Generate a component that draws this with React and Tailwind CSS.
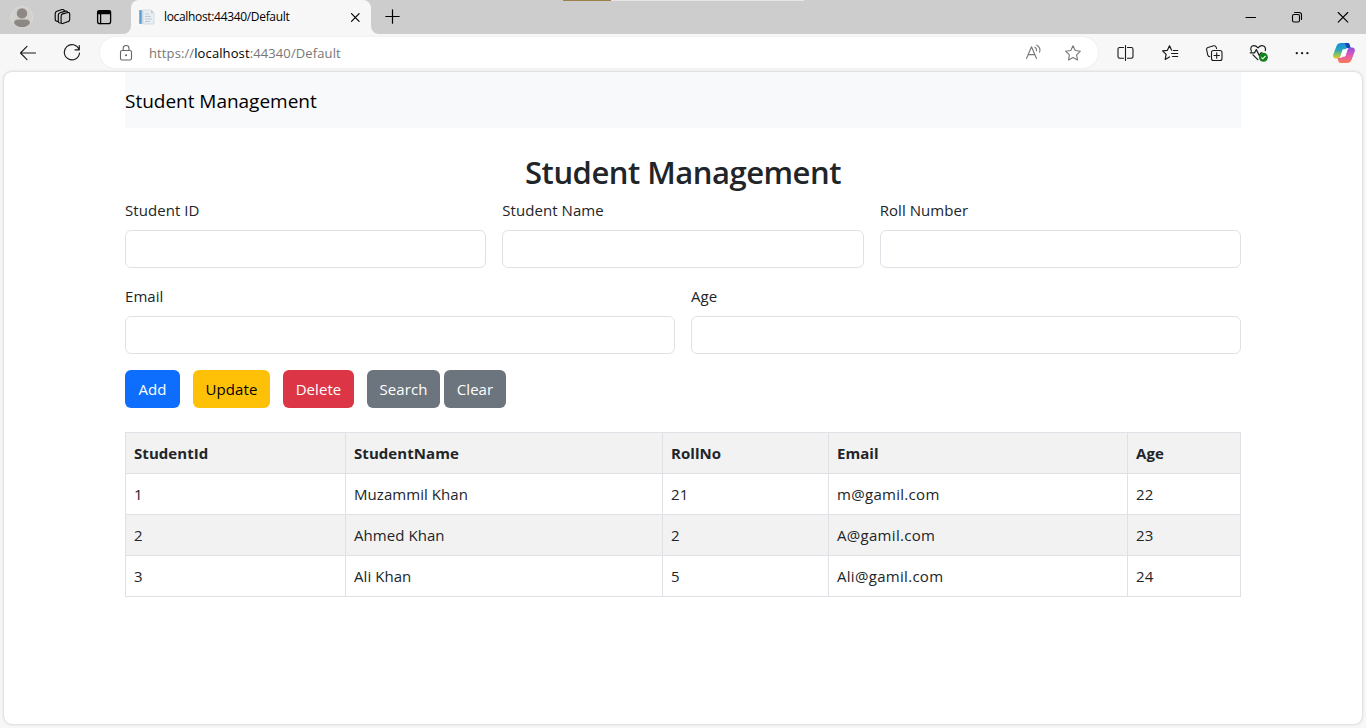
import React from "react";

const students = [
  { id: 1, name: "Muzammil Khan", roll: 21, email: "m@gamil.com", age: 22 },
  { id: 2, name: "Ahmed Khan", roll: 2, email: "A@gamil.com", age: 23 },
  { id: 3, name: "Ali Khan", roll: 5, email: "Ali@gamil.com", age: 24 },
];

function Icon({ size = 18, className = "", children, w = 1.1 }) {
  return (
    <svg
      width={size}
      height={size}
      viewBox={`0 0 ${size} ${size}`}
      className={`shrink-0 ${className}`}
      fill="none"
      stroke="currentColor"
      strokeWidth={w}
      strokeLinecap="round"
      strokeLinejoin="round"
    >
      {children}
    </svg>
  );
}

function TabStrip() {
  return (
    <div className="flex h-[34px] bg-[#f7f7f7] text-black">
      <div className="flex w-[131px] items-center rounded-br-lg bg-[#cdcdcd] pl-[11px]">
        <svg width="22" height="22" viewBox="0 0 22 22" className="shrink-0">
          <circle cx="11" cy="11" r="10.5" fill="#d2d0cd" stroke="#dddbd7" />
          <circle cx="11" cy="7.4" r="5.2" fill="#8d8884" />
          <path d="M3 17.2C3 14.6 5 13.5 7 13.5h8c2 0 4 1.1 4 3.7C17.2 19.8 14.3 21.2 11 21.2S4.8 19.8 3 17.2Z" fill="#8d8884" />
        </svg>
        <Icon className="ml-5" w={1.1}>
          <path d="M9.600 5.900 15 4.500c1-.2 1.700.3 1.700 1.300v5.600c0 1.100-.6 1.900-1.600 2.200l-5.300 1.900c-1 .3-1.700-.2-1.700-1.200V8.200c0-1.200.5-2 1.500-2.300Z" />
          <path d="M7.400 15c-1.200.2-2.100-.5-2.100-1.700V7c0-1.200.7-2 1.800-2.300l5.200-1.600c1-.3 1.800 0 2.200.8" />
          <path d="M4.500 13.400c-1.300 0-2.300-.7-2.300-2V5.700c0-1.200.6-2 1.700-2.400l5.200-1.700c1-.3 1.800 0 2.200.8" />
        </Icon>
        <Icon className="ml-[24px]" size={18} w={1.3}>
          <rect x="2.600" y="2.600" width="13" height="13" rx="2.200" />
          <path d="M3 3.200h12.400v2.500H3z" fill="currentColor" />
          <path d="M5.600 6v9.500" />
        </Icon>
      </div>
      <div className="w-[240px] bg-[#cdcdcd]">
        <div className="flex h-full items-center rounded-t-lg bg-[#f7f7f7] pr-[9px] pl-[8px]">
          <svg width="16" height="16" viewBox="0 0 16 16" className="shrink-0">
            <path d="M0 1h3.4v14H0z" fill="#83b5dc" />
            <path d="M1 2h1v12H1z" fill="#5d9ac9" />
            <path d="M4 1h8l3 3v11H4z" fill="#e9eef2" stroke="#cbd3da" strokeWidth=".7" />
            <path d="M12 1v3h3" fill="#bccbd8" />
            <path d="M6 5h4M6 7.500h6M6 10h7M6 12.500h5" stroke="#bdc9d4" />
          </svg>
          <span className="ml-[9px] text-[12px] leading-4 tracking-[-0.33px] whitespace-nowrap">localhost:44340/Default</span>
          <Icon size={14} className="ml-auto" w={1.2}>
            <path d="m3.500 3.700 7.600 7.600M11.100 3.700l-7.600 7.600" />
          </Icon>
        </div>
      </div>
      <div className="relative flex flex-1 items-center rounded-bl-lg bg-[#cdcdcd] pl-[14px]">
        <Icon size={16} w={1.2}>
          <path d="M.8 7.500h13.400M7.500.8v13.400" />
        </Icon>
        <div className="absolute top-0 left-[192px] flex h-px w-[241px] bg-[#e5e5e5]">
          <div className="w-12 bg-[#9c8049]" />
        </div>
        <div className="ml-auto flex items-center gap-8 pr-4">
          <Icon size={14} w={1.1}>
            <path d="M2 7.500h9.500" />
          </Icon>
          <Icon size={14} w={1.1}>
            <rect x="2.500" y="4.500" width="7" height="7.500" rx="1.500" />
            <path d="M4.600 2.500h4.600c1.600 0 2.300.9 2.300 2.300v4.700" />
          </Icon>
          <Icon size={14} w={1.1}>
            <path d="m2.200 2.500 9.600 9.600M11.800 2.500l-9.600 9.600" />
          </Icon>
        </div>
      </div>
    </div>
  );
}

function Toolbar() {
  return (
    <div className="flex h-[37px] items-center bg-[#f7f7f7] pl-[19px] text-[#1a1a1a]">
      <Icon w={1.1}>
        <path d="M16.500 9H1.500M8 2.400 1.500 9 8 15.600" />
      </Icon>
      <Icon className="ml-[26px]" w={1.15}>
        <path d="M16 5.400A7.600 7.600 0 1 0 16.500 9M16.300 1.600v4.200h-4.300" />
      </Icon>
      <div className="ml-[19px] flex h-[31px] w-[998px] items-center rounded-full bg-white pr-[16px] pl-[17px] text-[#777] shadow-[0_0_2px_#e2e2e2]">
        <Icon className="text-[#666]">
          <rect x="3.500" y="6.500" width="11" height="9.500" rx="1.600" />
          <path d="M6.200 6V4.300c0-1.700 1.200-2.800 2.900-2.800S12 2.600 12 4.300V6" />
          <circle cx="9.100" cy="11.200" r=".5" fill="currentColor" />
        </Icon>
        <span className="ml-[14px] text-[13px] leading-5 tracking-[0.11px] whitespace-nowrap">
          https://<span className="text-black">localhost</span>:44340/Default
        </span>
        <Icon className="ml-auto">
          <path d="M2.500 14.500 7.500 2.800l5 11.700M4.300 10.600h6.500M11 3.200c1.300.8 1.800 2.100 1.500 3.600M12.800 1.200c2.700 1.500 3.700 4.200 2.800 7" />
        </Icon>
        <Icon className="ml-[22px]">
          <path d="m9 1.700 2.200 4.800 5.200.7-3.800 3.600.9 5.200L9 13.400 4.500 16l.9-5.200L1.600 7.200l5.200-.7Z" />
        </Icon>
      </div>
      <Icon className="ml-[18px]" w={1.1}>
        <path d="M7.500 3.500H3.700c-1 0-1.700.7-1.700 1.700v7.400c0 1 .7 1.700 1.700 1.700h3.800M11.500 3.500h3.800c1 0 1.700.7 1.700 1.700v7.400c0 1-.7 1.700-1.700 1.700h-3.800M9.500 1.500v15" />
      </Icon>
      <Icon className="ml-[27px]" w={1.2}>
        <path d="M10.500 6.100 8.500 1.800 6.400 6.300l-4.800.6 3.500 3.500-.9 5 4.300-2.500M12.200 6.500h4.500M10.500 9.500h6.200M11.500 12.500h5.200" />
      </Icon>
      <Icon className="ml-[26px]" w={1.1}>
        <rect x="6.500" y="6.500" width="10.500" height="10" rx="2" />
        <path d="M11.700 8.800v5.400M9 11.500h5.400M4.800 12.600c-1 0-1.700-.5-2-1.500L1.600 5.600c-.2-1 .3-1.800 1.300-2.100L8.700 1.800c1.300-.3 2.100.2 2.400 1.300l.5 1.500" />
      </Icon>
      <svg width="20" height="20" viewBox="0 0 20 20" className="ml-[26px] shrink-0" fill="none">
        <path
          d="M2.400 8.300C.7 5 2.400 2.700 5 2.700c1.800 0 2.900 1 4 2.200 1.100-1.200 2.300-2.200 4-2.200 2.500 0 4.200 2 3.300 5M1.200 9.800h4.400l1.700-3.200 3.100 6 1.600-2.800h1M4 11.800l4.800 4.900"
          stroke="#1a1a1a"
          strokeWidth="1.200"
          strokeLinecap="round"
          strokeLinejoin="round"
        />
        <circle cx="14.400" cy="14.200" r="4.500" fill="#14801d" />
        <path d="m12.400 14.500 1.400 1.300 2.800-3" stroke="#fff" strokeWidth="1.100" />
      </svg>
      <Icon className="ml-[24px]">
        <g fill="currentColor" stroke="none">
          <circle cx="3.800" cy="9.200" r="1.150" />
          <circle cx="9.100" cy="9.200" r="1.150" />
          <circle cx="14.400" cy="9.200" r="1.150" />
        </g>
      </Icon>
      <svg width="22" height="20" viewBox="0 0 22 20" className="ml-[22px] shrink-0">
        <defs>
          <linearGradient id="cpLeft" x1="0" y1="0" x2="0" y2="1">
            <stop offset="0" stopColor="#1b8be0" />
            <stop offset=".45" stopColor="#28a6b8" />
            <stop offset=".72" stopColor="#7fc46a" />
            <stop offset="1" stopColor="#f4c51c" />
          </linearGradient>
          <linearGradient id="cpRight" x1="0" y1="0" x2="0" y2="1">
            <stop offset="0" stopColor="#8c4fe8" />
            <stop offset=".5" stopColor="#e05ab4" />
            <stop offset="1" stopColor="#fb7a50" />
          </linearGradient>
        </defs>
        <path d="M8 0h6.300c1.300 0 2 .6 2.400 1.900l.9 3.100h-3c-1.300 0-2.100.7-2.500 2H9.500L7.400 13.300c-.5 1.500-1.400 2.200-2.800 2.200H3C.6 15.500-.3 13.700.3 11.500L3.400 3.200C4.300.9 5.700 0 8 0Z" fill="url(#cpLeft)" />
        <path d="M11.300 0h3c1.300 0 2 .6 2.400 1.900l.9 3.100h-3.200C12.900 5 13.400 1.500 11.300 0Z" fill="#1746b5" />
        <path d="M14 20H7.700c-1.300 0-2-.6-2.400-1.900L4.400 15h3c1.300 0 2.100-.7 2.500-2h2.600l2.100-6.300c.5-1.500 1.400-2.200 2.800-2.200H19c2.400 0 3.300 1.800 2.700 4l-3.100 8.300c-.9 2.300-2.300 3.200-4.600 3.200Z" fill="url(#cpRight)" />
        <path d="M10.600 6.300h3.600l-2.100 6.600c-.2.600-.6.900-1.200.9H7.500l2-6.300c.2-.7.500-1.200 1.100-1.200Z" fill="#fff" />
      </svg>
    </div>
  );
}

function Field({ label }) {
  return (
    <label className="block">
      <span className="mb-2 block h-6 leading-6">{label}</span>
      <input className="block h-[38px] w-full rounded-md border border-[#dee2e6] bg-white px-3 outline-none" />
    </label>
  );
}

function Button({ className, children }) {
  return <button className={`flex h-[38px] items-center justify-center rounded-md ${className}`}>{children}</button>;
}

export default function App() {
  return (
    <div className="flex h-[728px] w-[1366px] flex-col overflow-hidden bg-[#f7f7f7] font-['Open_Sans','Noto_Sans',sans-serif] text-[15px] text-[#212529]">
      <TabStrip />
      <Toolbar />
      <main className="mx-1 mt-px mb-1 flex-1 overflow-hidden rounded-lg bg-white px-[121px] tracking-[0.06px] shadow-[0_0_3px_#bbb]">
        <nav className="flex h-14 items-center bg-[#f8f9fa] pt-0.5 text-[19px] tracking-[-0.02px] whitespace-nowrap text-black">
          <span>Student Management</span>
        </nav>
        <h2 className="mt-[25px] h-[38px] text-center text-[31px] leading-[38px] font-semibold tracking-[-0.5px] whitespace-nowrap">
          Student Management
        </h2>
        <form className="mt-[7px]">
          <div className="grid grid-cols-3 gap-4">
            <Field label="Student ID" />
            <Field label="Student Name" />
            <Field label="Roll Number" />
          </div>
          <div className="mt-4 grid grid-cols-2 gap-4">
            <Field label="Email" />
            <Field label="Age" />
          </div>
          <div className="mt-4 flex text-white">
            <Button className="w-[55px] bg-[#0d6efd]">Add</Button>
            <Button className="ml-[13px] w-[77px] bg-[#ffc107] text-black">Update</Button>
            <Button className="ml-[13px] w-[71px] bg-[#dc3545]">Delete</Button>
            <Button className="ml-[13px] w-[73px] bg-[#6c757d]">Search</Button>
            <Button className="ml-[4px] w-[62px] bg-[#6c757d]">Clear</Button>
          </div>
        </form>
        <table className="mt-6 w-[1116px] table-fixed border-collapse text-left [&_td]:border [&_td]:border-[#dee2e6] [&_td]:px-2 [&_td]:py-0 [&_th]:border [&_th]:border-[#dee2e6] [&_th]:px-2 [&_th]:py-0">
          <colgroup>
            <col className="w-[220px]" />
            <col className="w-[317px]" />
            <col className="w-[166px]" />
            <col className="w-[299px]" />
            <col />
          </colgroup>
          <tbody>
            <tr className="h-[41px] bg-[#f2f2f2]">
              <th>StudentId</th>
              <th>StudentName</th>
              <th>RollNo</th>
              <th>Email</th>
              <th>Age</th>
            </tr>
            {students.map((s) => (
              <tr key={s.id} className="h-[41px] odd:bg-[#f2f2f2]">
                <td>{s.id}</td>
                <td>{s.name}</td>
                <td>{s.roll}</td>
                <td className="tracking-[0.3px]">{s.email}</td>
                <td>{s.age}</td>
              </tr>
            ))}
          </tbody>
        </table>
      </main>
    </div>
  );
}
